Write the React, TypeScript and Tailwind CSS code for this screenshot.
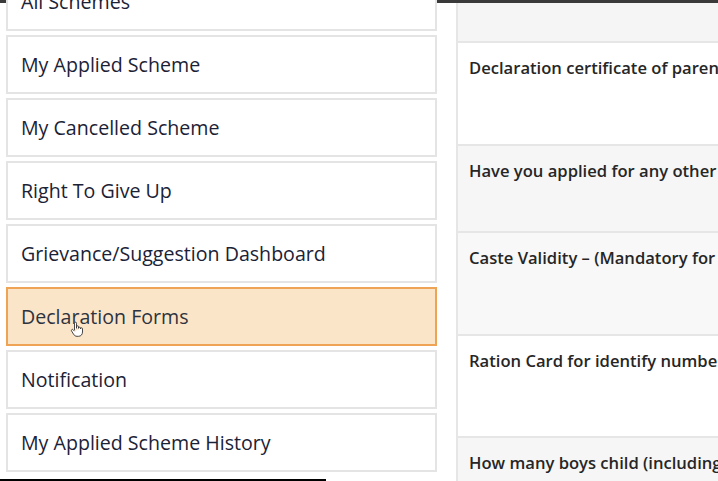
import React from "react";

const menu = [
  "All Schemes",
  "My Applied Scheme",
  "My Cancelled Scheme",
  "Right To Give Up",
  "Grievance/Suggestion Dashboard",
  "Declaration Forms",
  "Notification",
  "My Applied Scheme History",
];

const rows: { text: string; h: string; bg: string }[] = [
  { text: "", h: "h-[40px]", bg: "bg-[#f5f5f5]" },
  { text: "Declaration certificate of parents/guardian", h: "h-[103px]", bg: "bg-white" },
  { text: "Have you applied for any other scholarship", h: "h-[87px]", bg: "bg-[#f6f6f6]" },
  { text: "Caste Validity – (Mandatory for Professional courses)", h: "h-[103px]", bg: "bg-[#f8f8f8]" },
  { text: "Ration Card for identify number of children", h: "h-[102px]", bg: "bg-white" },
  { text: "How many boys child (including applicant)", h: "h-[60px]", bg: "bg-[#f6f6f6]" },
];

export default function App() {
  return (
    <div
      className="relative w-[718px] h-[481px] overflow-hidden bg-white flex flex-col"
      style={{ fontFamily: '"Open Sans", "Noto Sans", sans-serif' }}
    >
      <div className="h-[3px] w-full bg-[#3a3a3a] shrink-0" />
      <div className="flex flex-1 min-h-0">
        <div className="w-[437px] pl-[6px] shrink-0 flex flex-col gap-[4px] mt-[-31px]">
          {menu.map((m) => {
            const active = m === "Declaration Forms";
            return (
              <div
                key={m}
                className={
                  active
                    ? "h-[59px] shrink-0 flex items-center pl-[13px] border-2 border-[#efa355] bg-[#fae5c8] text-[19.6px] text-[#2e3340]"
                    : "h-[59px] shrink-0 flex items-center pl-[13px] border-2 border-[#e4e4e4] bg-white text-[19.6px] text-[#1b2236]"
                }
              >
                {m}
              </div>
            );
          })}
        </div>
        <div className="ml-[19px] flex-1 min-w-0 border-l-2 border-[#e6e6e6] flex flex-col">
          {rows.map((r, i) => (
            <div
              key={i}
              className={`${r.h} ${r.bg} shrink-0 border-b-2 border-[#e6e6e6] pl-[11px] pt-[13px] whitespace-nowrap overflow-hidden text-[16.6px] leading-[24px] font-semibold text-[#262626]`}
            >
              {r.text}
            </div>
          ))}
        </div>
      </div>
      <svg
        className="absolute left-[70px] top-[321px]"
        width="14"
        height="16"
        viewBox="0 0 14 16"
        fill="none"
      >
        <path
          d="M4.5 9V2.2a1 1 0 0 1 2 0V7.5 M6.5 7V5.8a1 1 0 0 1 2 0V7.5 M8.5 7.2a1 1 0 0 1 2 0V8 M10.5 7.8a1 1 0 0 1 2 0V11c0 2.5-1.6 4.3-4 4.3H7c-1.6 0-2.6-.8-3.4-2L1.6 10a1 1 0 0 1 1.6-1.2L4.5 10.2"
          stroke="#333"
          strokeWidth="0.9"
          fill="white"
          strokeLinejoin="round"
        />
      </svg>
      <div className="absolute left-0 bottom-0 h-[2px] w-[326px] bg-black" />
    </div>
  );
}
